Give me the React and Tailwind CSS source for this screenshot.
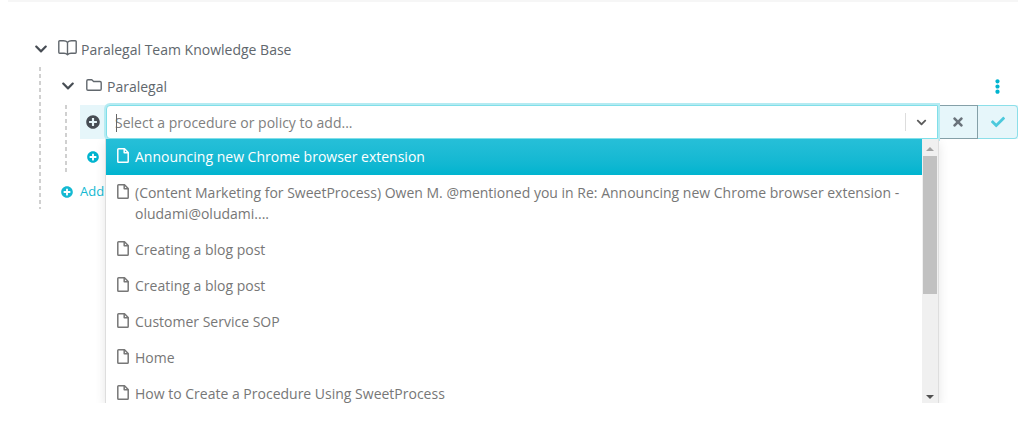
import React, { useState } from "react";
import {
  FaCheck,
  FaChevronDown,
  FaEllipsisV,
  FaPlusCircle,
  FaTimes,
} from "react-icons/fa";

const OPTIONS = [
  { id: 1, title: "Announcing new Chrome browser extension" },
  {
    id: 2,
    title:
      "(Content Marketing for SweetProcess) Owen M. @mentioned you in Re: Announcing new Chrome browser extension - oludami@oludami....",
  },
  { id: 3, title: "Creating a blog post" },
  { id: 4, title: "Creating a blog post" },
  { id: 5, title: "Customer Service SOP" },
  { id: 6, title: "Home" },
  { id: 7, title: "How to Create a Procedure Using SweetProcess" },
];

function BookIcon() {
  return (
    <svg
      width="19"
      height="16"
      viewBox="0 0 19 16"
      fill="none"
      stroke="currentColor"
      strokeWidth="1.4"
      strokeLinejoin="round"
      aria-hidden="true"
    >
      <path d="M9.5 2.200C8.500 1.200 7 .8 5.500.8H1.700a.9.9 0 0 0-.9.9v10.600c0 .5.4.9.9.9h4.300c1.500 0 2.700.5 3.500 1.500.8-1 2-1.500 3.500-1.500h4.300c.5 0 .9-.4.9-.9V1.700a.9.9 0 0 0-.9-.9h-3.800c-1.500 0-3 .4-4 1.400Z" />
      <path d="M9.500 2.200V14.500" />
    </svg>
  );
}

function FolderIcon() {
  return (
    <svg
      width="16"
      height="12"
      viewBox="0 0 16 12"
      fill="none"
      stroke="currentColor"
      strokeWidth="1.4"
      strokeLinejoin="round"
      aria-hidden="true"
    >
      <path d="M2 .8h3.800L7.600 2.500H14c.7 0 1.200.5 1.200 1.200V10c0 .7-.5 1.200-1.200 1.200H2C1.300 11.200.8 10.700.8 10V2C.8 1.300 1.300.8 2 .8Z" />
    </svg>
  );
}

function FileIcon() {
  return (
    <svg
      width="12"
      height="15"
      viewBox="0 0 12 15"
      fill="none"
      stroke="currentColor"
      strokeWidth="1.5"
      strokeLinejoin="round"
      className="mt-[2px] shrink-0"
      aria-hidden="true"
    >
      <path d="M1.600.8h5.900l3.700 3.700v8.900c0 .5-.3.8-.8.8H1.600c-.5 0-.8-.3-.8-.8V1.600c0-.5.300-.8.800-.8Z" />
      <path d="M7.200.8v4h4" />
    </svg>
  );
}

function Toggle({ label, open, onClick }) {
  return (
    <button
      type="button"
      aria-label={label}
      aria-expanded={open}
      onClick={onClick}
      className="text-[#474d54]"
    >
      <FaChevronDown size={14} />
    </button>
  );
}

function Branch({ className, children }) {
  return (
    <div
      className={`bg-[repeating-linear-gradient(to_bottom,#d0d0d0_0_4px,transparent_4px_7px)] bg-[length:2px_100%] bg-no-repeat pl-[2px] ${className}`}
    >
      {children}
    </div>
  );
}

function ScrollTrack() {
  return (
    <div
      aria-hidden="true"
      className="flex w-4 shrink-0 flex-col items-center bg-[#f0f0f0] pt-2 pb-1"
    >
      <span className="border-x-4 border-b-4 border-x-transparent border-b-[#a3a3a3]" />
      <span className="mt-[5px] h-[138px] w-3.5 bg-[#c1c1c1]" />
      <span className="mt-auto border-x-4 border-t-4 border-x-transparent border-t-[#505050]" />
    </div>
  );
}

function ProcedureSelect() {
  const [query, setQuery] = useState("");
  const [active, setActive] = useState(1);
  const [open, setOpen] = useState(true);

  const pick = (o) => {
    setQuery(o.title);
    setOpen(false);
  };

  return (
    <div className="relative z-10 min-w-0 flex-1">
      <div className="flex h-[34px] items-center rounded-l-sm border border-[#80dfe9] bg-white ring-2 ring-[#b5ebf2]">
        <div className="relative h-full min-w-0 flex-1">
          <input
            type="text"
            role="combobox"
            aria-label="Procedure or policy"
            aria-expanded={open}
            aria-controls="procedure-options"
            placeholder="Select a procedure or policy to add..."
            value={query}
            onChange={(e) => setQuery(e.target.value)}
            className="h-full w-full bg-transparent pt-px pl-2 text-[14px] text-[#555] caret-transparent outline-none placeholder:text-[#808080]"
          />
          <span className="absolute top-2 left-[9px] h-[18px] w-px bg-[#666]" />
        </div>
        <button
          type="button"
          aria-label="Show options"
          onClick={() => setOpen(!open)}
          className="flex h-[18px] w-8 items-center justify-center border-l border-[#ddd] text-[#5c5c5c]"
        >
          <FaChevronDown size={11} />
        </button>
      </div>

      {open && (
        <div className="absolute inset-x-0 top-full flex h-[264px] bg-white shadow-[0_0_0_1px_#dedede,0_4px_11px_rgba(0,0,0,0.12)] [clip-path:inset(0_-16px)]">
          <ul
            id="procedure-options"
            role="listbox"
            aria-label="Procedures and policies"
            className="min-w-0 flex-1 overflow-hidden"
          >
            {OPTIONS.map((o) => (
              <li
                key={o.id}
                role="option"
                aria-selected={o.id === active}
                onMouseEnter={() => setActive(o.id)}
                onClick={() => pick(o)}
                className={`flex gap-[6px] pt-[7px] pr-2 pb-2 pl-[11px] text-[14px] leading-[21px] ${
                  o.id === active
                    ? "bg-linear-to-b from-[#26bfd8] to-[#00b4cf] text-white"
                    : "text-[#777]"
                }`}
              >
                <FileIcon />
                <span>{o.title}</span>
              </li>
            ))}
          </ul>
          <ScrollTrack />
        </div>
      )}
    </div>
  );
}

export default function App() {
  const [baseOpen, setBaseOpen] = useState(true);
  const [folderOpen, setFolderOpen] = useState(true);

  return (
    <main className="min-h-screen bg-white pr-[6px] pl-2 font-['Open_Sans','Noto_Sans',sans-serif] text-[14px] text-[#61676d]">
      <hr className="border-t-2 border-[#f6f6f6]" />
      <section className="pt-[29px]">
        <div className="flex h-9 items-center pl-[26px]">
          <Toggle
            label="Toggle knowledge base"
            open={baseOpen}
            onClick={() => setBaseOpen(!baseOpen)}
          />
          <span className="mr-1 mb-[2px] ml-[10px]">
            <BookIcon />
          </span>
          <span>Paralegal Team Knowledge Base</span>
        </div>

        {baseOpen && (
          <Branch className="ml-[31px]">
            <div className="flex h-[38px] items-center pl-5">
              <Toggle
                label="Toggle Paralegal folder"
                open={folderOpen}
                onClick={() => setFolderOpen(!folderOpen)}
              />
              <span className="mr-[5px] mb-[2px] ml-[11px]">
                <FolderIcon />
              </span>
              <span>Paralegal</span>
              <button
                type="button"
                aria-label="Folder menu"
                className="mr-[13px] ml-auto text-[#00b4cf]"
              >
                <FaEllipsisV size={15} />
              </button>
            </div>

            {folderOpen && (
              <Branch className="ml-6">
                <div className="ml-[13px] flex h-[34px] bg-[#e6f6fa]">
                  <span className="flex w-[26px] items-center justify-center text-[#474d54]">
                    <FaPlusCircle size={14} />
                  </span>
                  <ProcedureSelect />
                  <button
                    type="button"
                    aria-label="Cancel"
                    className="flex w-10 items-center justify-center border border-[#84a0a8] text-[#6a737b]"
                  >
                    <FaTimes size={14} />
                  </button>
                  <button
                    type="button"
                    aria-label="Save"
                    className="flex w-10 items-center justify-center rounded-r-sm border border-l-0 border-[#8cdfe9] text-[#4cc9dc]"
                  >
                    <FaCheck size={14} />
                  </button>
                </div>
                <div className="flex h-[35px] items-center pl-5">
                  <button
                    type="button"
                    aria-label="Add to Paralegal"
                    className="text-[#00b4cf]"
                  >
                    <FaPlusCircle size={12} />
                  </button>
                </div>
              </Branch>
            )}

            <div className="flex h-[35px] items-center pl-5">
              <button
                type="button"
                className="flex items-center gap-[7px] text-[13px] text-[#14b9d2]"
              >
                <FaPlusCircle size={12} />
                Add
              </button>
            </div>
          </Branch>
        )}
      </section>
    </main>
  );
}
